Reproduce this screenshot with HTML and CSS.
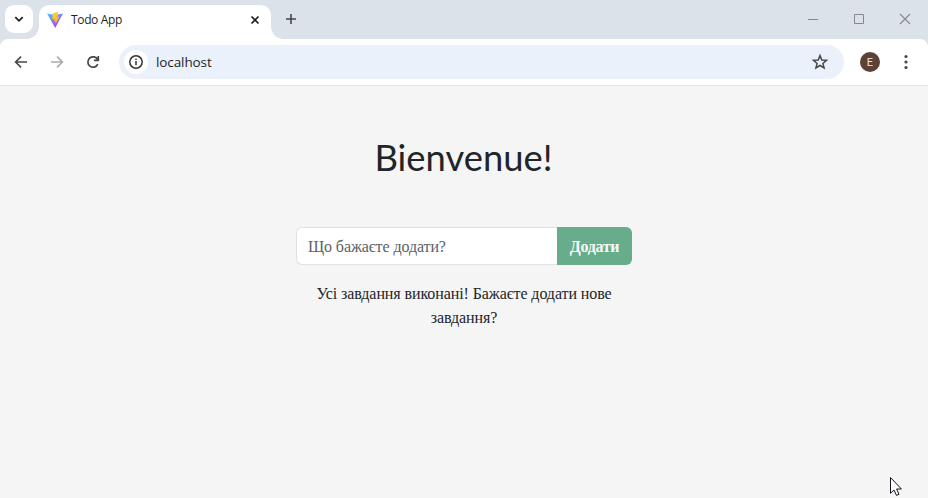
FILE: index.html
```html
<!DOCTYPE html>
<html lang="uk">
<head>
<meta charset="utf-8">
<title>Todo App</title>
<link rel="stylesheet" href="styles.css">
</head>
<body>
<header class="tabstrip">
  <div class="tab-search"><svg width="28" height="28" viewBox="0 0 28 28"><path d="M10.3 12.2 14 15.8 17.7 12.2" fill="none" stroke="#1f1f1f" stroke-width="1.8"/></svg></div>
  <div class="tab">
    <svg class="favicon" width="18" height="18" viewBox="0 0 18 18">
      <defs>
        <linearGradient id="shield" x1="0" y1="0" x2=".65" y2="1"><stop offset="0" stop-color="#41c8ff"/><stop offset="1" stop-color="#b437fe"/></linearGradient>
        <linearGradient id="bolt" x1="0" y1="0" x2="0" y2="1"><stop offset="0" stop-color="#ffd83d"/><stop offset="1" stop-color="#ffa800"/></linearGradient>
      </defs>
      <path d="M1 2.6 9 4 17 2.6 9.2 16.9Z" fill="url(#shield)"/>
      <path d="M12.4 .8 6.8 2 6.2 8.6 8.7 8.2 8.2 11.2 9.8 10.8 9.2 13.6 13.6 5.8 11.4 6.2Z" fill="url(#bolt)"/>
    </svg>
    <span class="tab-title">Todo App</span>
    <svg class="tab-close" width="10" height="10" viewBox="0 0 10 10"><path d="M1.5 1.5 8.5 8.5M8.5 1.5 1.5 8.5" stroke="#1f1f1f" stroke-width="1.7"/></svg>
  </div>
  <svg class="new-tab" width="12" height="12" viewBox="0 0 12 12"><path d="M6 1V11M1 6H11" stroke="#474747" stroke-width="1.6"/></svg>
  <div class="window-controls">
    <svg width="12" height="12" viewBox="0 0 12 12"><path d="M1 6.5H11" stroke="#85888c"/></svg>
    <svg width="12" height="12" viewBox="0 0 12 12"><path d="M1.5 1.5H10.5V10.5H1.5Z" fill="none" stroke="#85888c"/></svg>
    <svg width="12" height="12" viewBox="0 0 12 12"><path d="M1 1 11 11M11 1 1 11" stroke="#85888c" stroke-width="1.1"/></svg>
  </div>
</header>
<nav class="toolbar">
  <svg width="16" height="16" viewBox="0 0 16 16"><path d="M14 8H3M8 2.6 2.6 8 8 13.4" fill="none" stroke="#474747" stroke-width="1.6"/></svg>
  <svg width="16" height="16" viewBox="0 0 16 16"><path d="M2 8H13M8 2.6 13.4 8 8 13.4" fill="none" stroke="#acacac" stroke-width="1.6"/></svg>
  <svg width="16" height="16" viewBox="0 0 16 16"><path d="M12.8 10.2A5.2 5.2 0 1 1 12.7 5.6M13.3 2V6.4H8.9" fill="none" stroke="#474747" stroke-width="1.7"/></svg>
  <div class="omnibox">
    <div class="site-info"><svg width="16" height="16" viewBox="0 0 16 16"><circle cx="8" cy="8" r="6.2" fill="none" stroke="#333" stroke-width="1.5"/><path d="M8 7V11.2M8 4.5V6" stroke="#333" stroke-width="1.5"/></svg></div>
    <span class="url">localhost</span>
    <svg class="star" width="18" height="18" viewBox="0 0 18 18"><path d="M9 2.6 10.8 7 15.5 7.3 11.9 10.4 13.1 15 9 12.5 4.9 15 6.1 10.4 2.5 7.3 7.2 7Z" fill="none" stroke="#474747" stroke-width="1.5"/></svg>
  </div>
  <span class="avatar">E</span>
  <svg class="menu" width="6" height="16" viewBox="0 0 6 16"><g fill="#474747"><circle cx="3" cy="2.5" r="1.6"/><circle cx="3" cy="8" r="1.6"/><circle cx="3" cy="13.5" r="1.6"/></g></svg>
</nav>
<main class="page">
  <h1>Bienvenue!</h1>
  <form class="todo-form">
    <input class="todo-input" type="text" placeholder="Що бажаєте додати?">
    <button class="todo-add" type="button">Додати</button>
  </form>
  <p class="empty">Усі завдання виконані! Бажаєте додати нове завдання?</p>
</main>
<svg class="cursor" width="14" height="22" viewBox="0 0 14 22"><path d="M1.5 1.5V17.3L5 14 7.5 19.4 10 18.3 7.6 13H12.4Z" fill="#fff" stroke="#14141e" stroke-width="1"/></svg>
</body>
</html>
```
FILE: styles.css
```css
* { box-sizing: border-box; }
body {
  margin: 0;
  height: 498px;
  overflow: hidden;
  background: #f5f5f5;
  color: #212529;
  font-family: "Liberation Serif", serif;
}
svg { display: block; flex: none; }
.tabstrip {
  display: flex;
  height: 47px;
  padding: 5px 17px 8px 5px;
  background: #dce2ea;
}
.tab-search {
  width: 28px;
  height: 28px;
  border-radius: 9px;
  background: #fff;
}
.tab {
  position: relative;
  display: flex;
  align-items: center;
  width: 232px;
  height: 34px;
  margin-left: 6px;
  padding: 0 11px 5px 7px;
  border-radius: 10px 10px 0 0;
  background: #fff;
  font: 12px "Open Sans", sans-serif;
  color: #1f1f1f;
}
.tab::before,
.tab::after {
  content: "";
  position: absolute;
  bottom: 0;
  width: 12px;
  height: 12px;
}
.tab::before {
  right: 100%;
  background: radial-gradient(circle at 0 0, transparent 11.5px, #fff 12px);
}
.tab::after {
  left: 100%;
  background: radial-gradient(circle at 100% 0, transparent 11.5px, #fff 12px);
}
.tab-title { margin-left: 7px; letter-spacing: -.35px; }
.tab-close { margin-left: auto; }
.new-tab { margin: 8px 0 0 14px; }
.window-controls {
  display: flex;
  gap: 34px;
  margin: 8px 0 0 auto;
}
.toolbar {
  display: flex;
  align-items: center;
  gap: 20px;
  height: 47px;
  margin-top: -8px;
  padding: 0 19px 1px 13px;
  border-bottom: 1px solid #e0e2e4;
  border-radius: 8px 8px 0 0;
  background: #fff;
}
.omnibox {
  display: flex;
  align-items: center;
  width: 725px;
  height: 34px;
  margin-left: -2px;
  padding: 0 15px 0 5px;
  border-radius: 17px;
  background: #eaf1fa;
}
.site-info {
  display: grid;
  place-items: center;
  width: 24px;
  height: 24px;
  border-radius: 50%;
  background: #fff;
}
.url {
  margin-left: 8px;
  font: 13.5px "Open Sans", sans-serif;
  letter-spacing: -.1px;
  color: #1f1f1f;
}
.star { margin-left: auto; }
.avatar {
  flex: none;
  width: 20px;
  height: 20px;
  margin-left: -4px;
  border-radius: 50%;
  background: #5d4037;
  color: #e8e4e2;
  font: 11px/21px Roboto, sans-serif;
  text-align: center;
}
.menu { margin-left: 3px; }
.page {
  width: 336px;
  margin: 0 auto;
  padding-top: 47px;
}
h1 {
  margin: 0 1px 46px 0;
  font: 400 36.4px/48px Lato, sans-serif;
  text-align: center;
  white-space: nowrap;
}
.todo-form { display: flex; height: 38px; }
.todo-input {
  flex: 1;
  min-width: 0;
  padding: 2px 11px 0;
  border: 1px solid #dee2e6;
  border-right: 0;
  border-radius: 6px 0 0 6px;
  background: #fff;
  font: 16px "Liberation Serif", serif;
  letter-spacing: -.1px;
}
.todo-input::placeholder { color: #5c6166; opacity: 1; }
.todo-add {
  width: 75px;
  padding: 2px 0 0;
  border: 0;
  border-radius: 0 6px 6px 0;
  background: #67ad8b;
  color: #f8f9fa;
  font: bold 16px "Liberation Serif", serif;
  letter-spacing: -.3px;
}
.empty {
  margin: 17px 0 0;
  padding: 0 12px;
  font-size: 16px;
  line-height: 24px;
  letter-spacing: -.09px;
  text-align: center;
}
.cursor { position: absolute; left: 889px; top: 476px; }
```
